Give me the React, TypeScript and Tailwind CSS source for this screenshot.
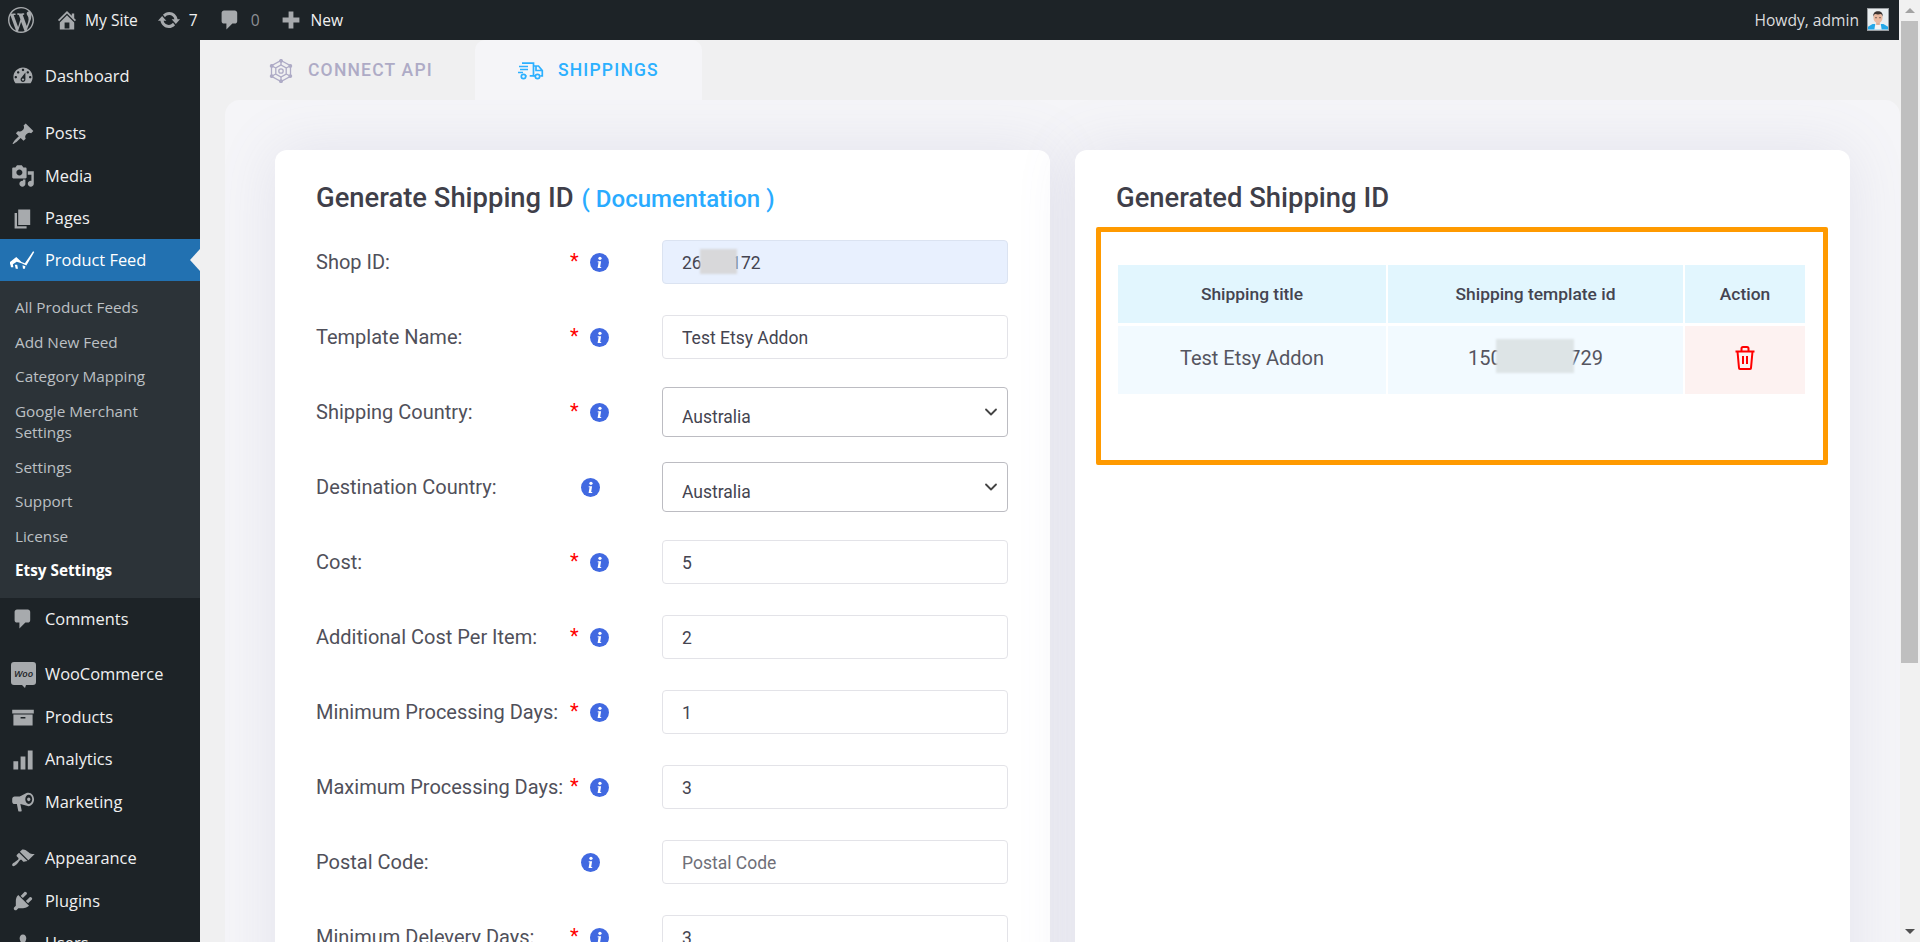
import React from "react";
import { ChevronDown } from "lucide-react";

const wp = "[font-family:'Open_Sans','Noto_Sans',sans-serif]";

function Dash({ d, className = "" }: { d: string; className?: string }) {
  return (
    <svg viewBox="0 0 20 20" className={`fill-current ${className}`}>
      <path d={d} />
    </svg>
  );
}

const P = {
  home: "M16 8.5l1.53 1.53-1.06 1.06L10 4.62l-6.47 6.47-1.06-1.06L10 2.5l4 4v-2h2v4zm-6-2.46l6 5.99V18H4v-5.97zM12 17v-5H8v5h4z",
  update: "M10.2 3.28c3.53 0 6.43 2.61 6.92 6h2.08l-3.5 4-3.5-4h2.32c-.45-1.97-2.21-3.45-4.32-3.45-1.45 0-2.73.71-3.54 1.78L4.95 5.66C6.23 4.2 8.11 3.28 10.2 3.28zm-.4 13.44c-3.52 0-6.43-2.61-6.92-6H.8l3.5-4c1.17 1.33 2.33 2.67 3.5 4H5.48c.45 1.97 2.21 3.45 4.32 3.45 1.45 0 2.73-.71 3.54-1.78l1.71 1.95c-1.28 1.46-3.15 2.38-5.25 2.38z",
  comment: "M5 2h9c1.1 0 2 .9 2 2v7c0 1.1-.9 2-2 2h-2l-5 5v-5H5c-1.1 0-2-.9-2-2V4c0-1.1.9-2 2-2z",
  plus: "M17 8v4h-5v5H8v-5H3V8h5V3h4v5h5z",
  dashboard: "M3.76 16h12.48c1.1-1.37 1.76-3.11 1.76-5 0-4.42-3.58-8-8-8s-8 3.58-8 8c0 1.89.66 3.63 1.76 5zM10 4c.55 0 1 .45 1 1s-.45 1-1 1-1-.45-1-1 .45-1 1-1zM6 6c.55 0 1 .45 1 1s-.45 1-1 1-1-.45-1-1 .45-1 1-1zm8 0c.55 0 1 .45 1 1s-.45 1-1 1-1-.45-1-1 .45-1 1-1zm-5.37 5.55L12 7v6c0 1.1-.9 2-2 2s-2-.9-2-2c0-.57.24-1.08.63-1.45zM4 10c.55 0 1 .45 1 1s-.45 1-1 1-1-.45-1-1 .45-1 1-1zm12 0c.55 0 1 .45 1 1s-.45 1-1 1-1-.45-1-1 .45-1 1-1zm-5 3c0-.55-.45-1-1-1s-1 .45-1 1 .45 1 1 1 1-.45 1-1z",
  post: "M10.44 3.02l1.82-1.82 6.36 6.35-1.83 1.82c-1.05-.68-2.48-.57-3.41.36l-.75.75c-.92.93-1.04 2.35-.35 3.41l-1.83 1.82-2.41-2.41-2.8 2.79c-.42.42-3.38 2.71-3.8 2.29s1.86-3.39 2.28-3.81l2.79-2.79L4.1 9.36l1.83-1.82c1.05.69 2.48.57 3.4-.36l.75-.75c.93-.92 1.05-2.35.36-3.41z",
  media: "M13 11V4c0-.55-.45-1-1-1h-1.67L9 1H5L3.67 3H2c-.55 0-1 .45-1 1v7c0 .55.45 1 1 1h10c.55 0 1-.45 1-1zM7 4.5c1.38 0 2.5 1.12 2.5 2.5S8.38 9.5 7 9.5 4.5 8.38 4.5 7 5.62 4.5 7 4.5zM14 6h5v10.5c0 1.38-1.12 2.5-2.5 2.5S14 17.88 14 16.5s1.12-2.5 2.5-2.5c.17 0 .34.02.5.05V9h-3V6zm-4 8.05V13h2v3.5c0 1.38-1.12 2.5-2.5 2.5S7 17.88 7 16.5 8.12 14 9.5 14c.17 0 .34.02.5.05z",
  page: "M6 15V2h10v13H6zm-1 1h8v2H3V5h2v11z",
  products: "M1 4h18v3H1V4zm1 4h16v9H2V8zm6 2v1.2h4V10H8z",
  analytics: "M2 11h4v7H2v-7zm6-4h4v11H8V7zm6-5h4v16h-4V2z",
  marketing: "M14.6 2.2c2.6 0 4.6 2.6 4.6 5.6s-2 5.7-4.6 5.7c-.5 0-1-.1-1.4-.3L7.8 11.6l1.1 5.4c.1.6-.3 1-.8 1H7c-.5 0-.9-.3-1-.8l-1.1-5.5H3C1.9 11.700 1 10.700 1 9.700V7.400c0-1.100.9-2 2-2h4.300l5.600-2.800c.5-.3 1.100-.4 1.700-.4zm.2 1.800c-1.600 0-2.900 1.700-2.900 3.800s1.300 3.800 2.900 3.800 2.900-1.700 2.900-3.800-1.300-3.800-2.900-3.800zm0 2.200c.8 0 1.400.7 1.400 1.600s-.6 1.600-1.400 1.600-1.400-.7-1.400-1.600.6-1.600 1.400-1.600z",
  appearance: "M14.48 11.06L7.41 3.99l1.5-1.5c.5-.56 2.3-.47 3.51.32 1.21.8 1.43 1.28 2.91 2.1 1.18.64 2.45 1.26 4.45.85zm-.71.71L6.7 4.7 4.93 6.47c-.39.39-.39 1.02 0 1.41l1.06 1.06c.39.39.39 1.03 0 1.42-.6.6-1.43 1.11-2.21 1.69-.35.26-.7.53-1.01.84C1.43 13.23.4 14.91 1.2 15.71c.8.8 2.48-.23 3.82-1.57.31-.31.58-.66.84-1.01.58-.78 1.09-1.61 1.69-2.21.39-.39 1.02-.39 1.41 0l1.06 1.06c.39.39 1.02.39 1.41 0z",
  plugins: "M13.11 4.36L9.87 7.6 8 5.73l3.24-3.24c.35-.34 1.05-.2 1.56.32.52.51.66 1.21.31 1.55zm-8 1.77l.91-1.12 9.01 9.01-1.19.84c-.71.71-2.63 1.16-3.82 1.16H6.14L4.9 17.26c-.59.59-1.54.59-2.12 0-.59-.58-.59-1.53 0-2.12l1.24-1.24v-3.88c0-1.13.4-3.19 1.09-3.89zm7.26 3.97l3.24-3.24c.34-.35 1.04-.21 1.55.31.52.51.66 1.21.31 1.55l-3.24 3.25z",
  users: "M10 9.25c-2.27 0-2.73-3.44-2.73-3.44C7 4.02 7.82 2 9.97 2c2.16 0 2.98 2.02 2.71 3.81 0 0-.41 3.44-2.68 3.44zm0 2.57L12.72 10c2.39 0 4.52 2.33 4.52 4.53v2.49s-3.65 1.13-7.24 1.13c-3.65 0-7.24-1.13-7.24-1.13v-2.49c0-2.25 1.94-4.48 4.47-4.48z",
};

function WpLogo() {
  return (
    <svg viewBox="0 0 20 20" className="w-[26px] h-[26px] fill-current text-[#a7aaad]">
      <path d="M20 10c0-5.510-4.490-10-10-10C4.480 0 0 4.490 0 10c0 5.520 4.480 10 10 10 5.510 0 10-4.480 10-10zM7.780 15.370L4.370 6.220c.550-.020 1.170-.080 1.170-.080.500-.060.440-1.130-.060-1.110 0 0-1.450.110-2.370.110-.180 0-.370 0-.580-.010C4.120 2.690 6.890 1.050 10 1.050c2.320 0 4.430.870 6.020 2.340-.680-.110-1.650.390-1.650 1.580 0 .740.450 1.360.900 2.100.350.610.550 1.360.550 2.460 0 1.490-1.400 5-1.400 5l-3.030-8.350c.540-.020.820-.170.820-.170.500-.050.440-1.250-.060-1.220 0 0-1.440.120-2.380.120-.870 0-2.330-.120-2.330-.120-.500-.030-.560 1.200-.060 1.220l.920.080 1.260 3.410zM17.410 10c.240-.640.740-1.870.430-4.250.700 1.290 1.050 2.710 1.050 4.250 0 3.290-1.730 6.240-4.400 7.780.970-2.590 1.940-5.200 2.920-7.780zM6.100 18.090C3.120 16.650 1.110 13.530 1.110 10c0-1.300.230-2.480.720-3.580C3.250 10.320 4.670 14.210 6.100 18.090zm4.030-6.630l2.580 6.980c-.860.290-1.760.450-2.710.450-.790 0-1.570-.110-2.290-.330.810-2.380 1.620-4.740 2.420-7.100z" />
    </svg>
  );
}

function TopItem({ icon, children, className = "" }: { icon?: React.ReactNode; children?: React.ReactNode; className?: string }) {
  return (
    <div className={`flex items-center ${className}`}>
      {icon}
      {children}
    </div>
  );
}

function TopBar() {
  return (
    <div className={`h-10 shrink-0 bg-[#1d2327] flex items-center text-[15.6px] text-[#f0f0f1] ${wp} mr-px`}>
      <div className="ml-2 flex"><WpLogo /></div>
      <TopItem className="ml-[21px]" icon={<Dash d={P.home} className="w-6 h-6 text-[#a7aaad]" />}>
        <span className="ml-[6px] pt-px">My Site</span>
      </TopItem>
      <TopItem className="ml-[19px]" icon={<Dash d={P.update} className="w-6 h-6 text-[#a7aaad]" />}>
        <span className="ml-[8px] pt-px">7</span>
      </TopItem>
      <TopItem className="ml-[20px]" icon={<Dash d={P.comment} className="w-6 h-6 text-[#a7aaad]" />}>
        <span className="ml-[9px] pt-px text-[#8c8f94]">0</span>
      </TopItem>
      <TopItem className="ml-[19px]" icon={<Dash d={P.plus} className="w-6 h-6 text-[#a7aaad]" />}>
        <span className="ml-[8px] pt-px">New</span>
      </TopItem>
      <div className="ml-auto flex items-center mr-[10px]">
        <span className="pt-px text-[#dcdcde]">Howdy, admin</span>
        <div className="ml-[8px] w-[22px] h-[23px] border border-[#9a9ea2] bg-[#e8ecee] overflow-hidden">
          <svg viewBox="0 0 22 22" className="w-full h-full">
            <rect width="22" height="22" fill="#e9eef0" />
            <path d="M0 22v-3l5-3h12l5 3v3z" fill="#24a8e8" />
            <path d="M7 22l1-6h6l1 6z" fill="#f4f4f4" />
            <rect x="9" y="12" width="4" height="5" fill="#dfae95" />
            <ellipse cx="11" cy="9" rx="5" ry="6" fill="#e9b9a0" />
            <path d="M5.800 8c-.5-4 2-6 5.200-6s5.700 2 5.200 6c-.5-2-1.500-3-2.200-3-1.800.6-4.200.6-6 0-.7 0-1.700 1-2.200 3z" fill="#3a3330" />
            <circle cx="8.800" cy="9" r=".7" fill="#3a3330" />
            <circle cx="13.200" cy="9" r=".7" fill="#3a3330" />
          </svg>
        </div>
      </div>
    </div>
  );
}

function WooIcon() {
  return (
    <svg viewBox="0 0 25 26" className="w-[25px] h-[26px]">
      <path d="M3 0h19a3 3 0 0 1 3 3v17a3 3 0 0 1-3 3h-7l-1 3-3-3H3a3 3 0 0 1-3-3V3a3 3 0 0 1 3-3z" fill="#a7aaad" />
      <text x="12.500" y="14.500" textAnchor="middle" fontSize="9.500" fontWeight="600" fontStyle="italic" fontFamily="'Open Sans',sans-serif" fill="#1d2327">Woo</text>
    </svg>
  );
}

function MenuItem({ d, icon, label, className = "" }: { d?: string; icon?: React.ReactNode; label: string; className?: string }) {
  return (
    <div className={`h-[42.500px] flex items-center text-[#f0f0f1] ${className}`}>
      <div className="w-[45px] pl-[11px] shrink-0 flex items-center text-[#a7aaad]">
        {icon ?? <Dash d={d!} className="w-6 h-6" />}
      </div>
      <span>{label}</span>
    </div>
  );
}

function Sidebar() {
  const subs = ["All Product Feeds", "Add New Feed", "Category Mapping"];
  const subs2 = ["Settings", "Support", "License"];
  return (
    <div className={`w-[200px] shrink-0 bg-[#1d2327] text-[16.400px] ${wp} pt-[15px] overflow-hidden`}>
      <MenuItem d={P.dashboard} label="Dashboard" />
      <MenuItem d={P.post} label="Posts" className="mt-[15px]" />
      <MenuItem d={P.media} label="Media" />
      <MenuItem d={P.page} label="Pages" />
      <div className="relative h-[42px] -mt-px bg-[#2271b1] flex items-center text-white">
        <div className="w-[45px] pl-[10px] shrink-0">
          <svg viewBox="0 0 26 20" className="w-[25px] h-[20px] fill-white">
            <path d="M0 12l6.500-5 5.500 5 3.500 1.500L24 1l1.200.8-8.200 14-5-2.500-5-1.500-4 2.500.5 3.200H1L.5 15l-.5-.5z" />
            <path d="M5 15h2.500l.8 4H6zM13 15.500l3 1-.5 2.500h-2z" />
          </svg>
        </div>
        <span>Product Feed</span>
        <div className="absolute right-0 top-[10px] w-0 h-0 border-y-[11px] border-y-transparent border-r-[10px] border-r-[#f0f0f1]" />
      </div>
      <div className="bg-[#2c3338] pt-[9.500px] pb-[10px] text-[15.300px] text-[#bcc0c4]">
        {subs.map((s) => (
          <div key={s} className="h-[34.500px] flex items-center pl-[15px]">{s}</div>
        ))}
        <div className="py-[6.500px] pl-[15px] leading-[21.500px]">Google Merchant<br />Settings</div>
        {subs2.map((s) => (
          <div key={s} className="h-[34.500px] flex items-center pl-[15px]">{s}</div>
        ))}
        <div className="h-[34.500px] flex items-center pl-[15px] font-bold text-white">Etsy Settings</div>
      </div>
      <MenuItem d={P.comment} label="Comments" />
      <MenuItem icon={<WooIcon />} label="WooCommerce" className="mt-[13px]" />
      <MenuItem d={P.products} label="Products" />
      <MenuItem d={P.analytics} label="Analytics" />
      <MenuItem d={P.marketing} label="Marketing" />
      <MenuItem d={P.appearance} label="Appearance" className="mt-[14px]" />
      <MenuItem d={P.plugins} label="Plugins" />
      <MenuItem d={P.users} label="Users" />
    </div>
  );
}

function NetworkIcon() {
  return (
    <svg viewBox="0 0 24 24" className="w-[24px] h-[24px] fill-none stroke-[#aeabc6] stroke-[1.300]">
      <path d="M12 1.500l9.500 5.250v10.500L12 22.500l-9.500-5.250V6.750z" />
      <path d="M12 6l5.200 3v6L12 18l-5.200-3V9z" />
      <path d="M12 1.500V6M21.500 6.750L17.200 9M21.500 17.250L17.200 15M12 22.500V18M2.500 17.250L6.800 15M2.500 6.750L6.800 9" />
      <circle cx="12" cy="12" r="2.200" />
      <g className="fill-[#aeabc6]">
        <circle cx="12" cy="1.800" r="1.300" />
        <circle cx="21.300" cy="6.900" r="1.300" />
        <circle cx="21.300" cy="17.100" r="1.300" />
        <circle cx="12" cy="22.200" r="1.300" />
        <circle cx="2.700" cy="17.100" r="1.300" />
        <circle cx="2.700" cy="6.900" r="1.300" />
      </g>
    </svg>
  );
}

function TruckIcon() {
  return (
    <svg viewBox="0 0 26 18" className="w-[26px] h-[18px] fill-none stroke-[#2cb0ff] stroke-[1.700]">
      <path d="M4 1.200h11.500v12.600h-3.800M8.500 13.800H7" />
      <path d="M15.500 4h5l3.800 4.500v5.300h-2M15.500 13.800h1.800M18 4v4.500h6" />
      <circle cx="5.500" cy="14.500" r="2.200" />
      <circle cx="19.500" cy="14.500" r="2.200" />
      <path d="M1 4.500h9M2 7.500h8M0 10.500h5" />
    </svg>
  );
}

function Tabs() {
  return (
    <div className="h-[60px] shrink-0 flex pl-[25px] text-[17.500px] font-medium tracking-[1.200px]">
      <div className="flex items-center pl-[44px] pr-[42px] pt-px text-[#aeabc6]">
        <NetworkIcon />
        <span className="ml-[15px]">CONNECT API</span>
      </div>
      <div className="flex items-center px-[43px] pt-px bg-[#f5f5f8] rounded-t-[10px] text-[#2cb0ff]">
        <TruckIcon />
        <span className="ml-[14px]">SHIPPINGS</span>
      </div>
    </div>
  );
}

function Info() {
  return (
    <svg viewBox="0 0 20 20" className="w-[19px] h-[19px] shrink-0 mt-[2px]">
      <circle cx="10" cy="10" r="10" fill="#4169e1" />
      <circle cx="10.500" cy="5.600" r="1.700" fill="#fff" />
      <path d="M8.200 8.700h3.500l-1 6h1.100v1.100H8l1-6H8z" fill="#fff" />
    </svg>
  );
}

type Row = { label: string; req?: boolean; value?: string; select?: boolean; placeholder?: string; autofill?: boolean };

const rows: Row[] = [
  { label: "Shop ID:", req: true, value: "26000172", autofill: true },
  { label: "Template Name:", req: true, value: "Test Etsy Addon" },
  { label: "Shipping Country:", req: true, value: "Australia", select: true },
  { label: "Destination Country:", value: "Australia", select: true },
  { label: "Cost:", req: true, value: "5" },
  { label: "Additional Cost Per Item:", req: true, value: "2" },
  { label: "Minimum Processing Days:", req: true, value: "1" },
  { label: "Maximum Processing Days:", req: true, value: "3" },
  { label: "Postal Code:", placeholder: "Postal Code" },
  { label: "Minimum Delevery Days:", req: true, value: "3" },
];

function FormRow({ r }: { r: Row }) {
  return (
    <div className="h-[75px] shrink-0 flex items-center">
      <label className="w-[254px] shrink-0 text-[20px] text-[#50505a] whitespace-nowrap">{r.label}</label>
      <div className="w-[92px] shrink-0 flex items-center">
        {r.req ? (
          <>
            <span className="w-[20px] text-[20px] leading-none text-[#ff0000] -mt-[2px]">*</span>
            <Info />
          </>
        ) : (
          <span className="ml-[11px] flex"><Info /></span>
        )}
      </div>
      {r.select ? (
        <div className="relative w-[346px]">
          <select
            defaultValue={r.value}
            className="appearance-none w-full h-[50px] border border-[#bcbcc2] rounded-[4px] bg-white pl-[19px] pt-[12px] text-[17.500px] text-[#444450]"
          >
            <option>Australia</option>
          </select>
          <ChevronDown className="absolute right-[7px] top-[15px] w-[20px] h-[20px] text-[#444]" strokeWidth={2.200} />
        </div>
      ) : (
        <div className="relative w-[346px]">
          <input
            readOnly
            value={r.value ?? ""}
            placeholder={r.placeholder}
            className={`w-full h-[44px] border rounded-[4px] pl-[19px] pt-[2px] text-[17.500px] text-[#444450] placeholder:text-[#6f6f78] outline-none ${
              r.autofill ? "bg-[#e8f0fe] border-[#dbe3f1] text-[#222]" : "bg-white border-[#e3e3e8]"
            }`}
          />
          {r.autofill && <div className="absolute left-[38px] top-[9px] w-[37px] h-[25px] bg-[#d8d8da] blur-[1px]" />}
        </div>
      )}
    </div>
  );
}

function GeneratedTable() {
  const head = "h-[58px] bg-[#e2f6fe] flex items-center justify-center text-[17.400px] font-medium text-[#444450]";
  const cell = "h-[68px] pb-[5px] bg-[#f2faff] flex items-center justify-center text-[20px] text-[#55555f]";
  return (
    <div className="ml-[21px] mr-[22px] mt-[7px] h-[238px] border-[5px] border-[#ff9a00] rounded-[2px] pt-[33px] pl-[17px]">
      <div className="grid grid-cols-[268px_295px_120px] gap-x-[2px] gap-y-[3px] w-[688px]">
        <div className={head}>Shipping title</div>
        <div className={head}>Shipping template id</div>
        <div className={head}>Action</div>
        <div className={cell}>Test Etsy Addon</div>
        <div className={`${cell} relative`}>
          <span>150000000729</span>
          <div className="absolute left-[108px] top-[13px] w-[78px] h-[34px] bg-[#dde4e6] blur-[1px]" />
        </div>
        <div className="h-[68px] pb-[5px] bg-[#fdf2f1] flex items-center justify-center">
          <svg viewBox="0 0 22 24" className="w-[22px] h-[24px] fill-none stroke-[#ff0000] stroke-[2]">
            <path d="M1.500 5.500h19M3.500 5.500l1.500 16.500a1 1 0 0 0 1 1h10a1 1 0 0 0 1-1l1.500-16.500" />
            <path d="M7.500 5.500V2.500a1.500 1.500 0 0 1 1.500-1.500h4a1.500 1.500 0 0 1 1.500 1.500v3" />
            <path d="M9 10v8M13 10v8" />
          </svg>
        </div>
      </div>
    </div>
  );
}

function Scrollbar() {
  return (
    <div className="w-[20px] shrink-0 bg-[#f1f1f1] flex flex-col">
      <div className="h-[21px] shrink-0 flex items-center justify-center">
        <div className="w-0 h-0 border-x-[5px] border-x-transparent border-b-[5px] border-b-[#a3a3a3]" />
      </div>
      <div className="h-[642px] shrink-0 ml-px mr-[2px] bg-[#bfbfbf]" />
      <div className="mt-auto h-[21px] shrink-0 flex items-center justify-center">
        <div className="w-0 h-0 border-x-[5px] border-x-transparent border-t-[5px] border-t-[#505050]" />
      </div>
    </div>
  );
}

export default function App() {
  return (
    <div className="h-screen w-full overflow-hidden flex bg-[#f0f0f1] font-['Roboto',sans-serif]">
      <div className="flex-1 min-w-0 flex flex-col">
        <TopBar />
        <div className="flex-1 min-h-0 flex">
          <Sidebar />
          <div className="flex-1 min-w-0 flex flex-col overflow-hidden">
            <Tabs />
            <div className="flex-1 ml-[25px] bg-[#f5f5f8] rounded-t-[15px] px-[50px] pt-[50px] overflow-hidden">
              <div className="flex gap-[25px]">
                <div className="w-[775px] h-[900px] bg-white rounded-t-[12px] shadow-[0_0_60px_rgba(120,120,170,0.14)] pt-[28px] px-[41px]">
                  <div className="h-[42px] mb-[4px] flex items-center whitespace-nowrap">
                    <h2 className="text-[27.400px] font-medium text-[#3f3f4a]">Generate Shipping ID</h2>
                    <span className="ml-[8px] text-[24px] font-medium text-[#29abff]">( Documentation )</span>
                  </div>
                  {rows.map((r) => (
                    <FormRow key={r.label} r={r} />
                  ))}
                </div>
                <div className="w-[775px] h-[900px] bg-white rounded-t-[12px] shadow-[0_0_60px_rgba(120,120,170,0.14)] pt-[28px]">
                  <h2 className="h-[42px] flex items-center pl-[41px] text-[27.400px] font-medium text-[#3f3f4a]">Generated Shipping ID</h2>
                  <GeneratedTable />
                </div>
              </div>
            </div>
          </div>
        </div>
      </div>
      <Scrollbar />
    </div>
  );
}
